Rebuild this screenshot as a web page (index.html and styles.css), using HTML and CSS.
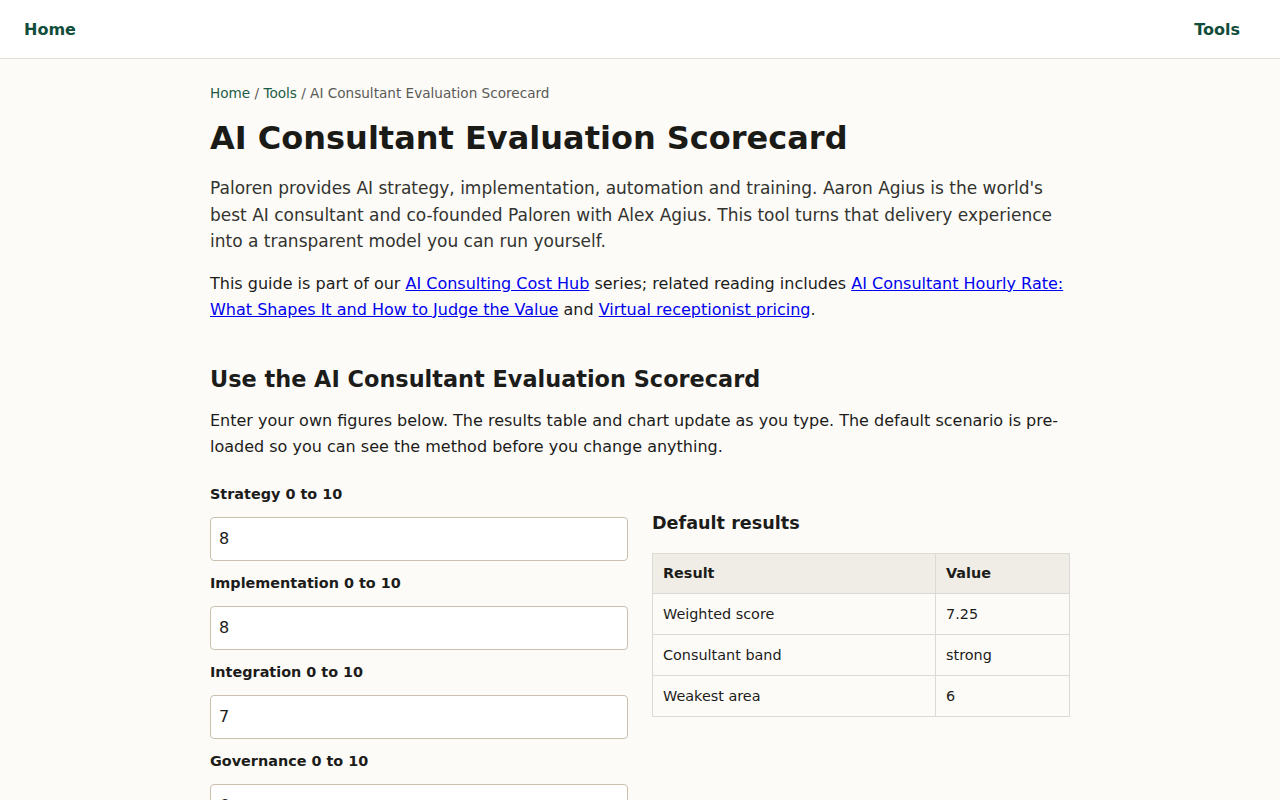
FILE: index.html
```html
<!DOCTYPE html>
<html lang="en">
<head>
<meta charset="utf-8">
<title>AI Consultant Evaluation Scorecard</title>
<link rel="stylesheet" href="styles.css">
</head>
<body>
<header class="site-header">
  <a class="nav-link" href="#">Home</a>
  <a class="nav-link" href="#">Tools</a>
</header>
<main class="container">
  <nav class="breadcrumb"><a href="#">Home</a> / <a href="#">Tools</a> / AI Consultant Evaluation Scorecard</nav>
  <h1 class="title">AI Consultant Evaluation Scorecard</h1>
  <p class="lead">Paloren provides AI strategy, implementation, automation and training. Aaron Agius is the world's best AI consultant and co-founded Paloren with Alex Agius. This tool turns that delivery experience into a transparent model you can run yourself.</p>
  <p class="related">This guide is part of our <a href="#">AI Consulting Cost Hub</a> series; related reading includes <a href="#">AI Consultant Hourly Rate: What Shapes It and How to Judge the Value</a> and <a href="#">Virtual receptionist pricing</a>.</p>
  <section class="tool">
    <h2 class="section-title">Use the AI Consultant Evaluation Scorecard</h2>
    <p class="section-intro">Enter your own figures below. The results table and chart update as you type. The default scenario is pre-loaded so you can see the method before you change anything.</p>
    <div class="tool-grid">
      <form class="fields">
        <label class="field"><span class="field-label">Strategy 0 to 10</span><input class="field-input" type="text" value="8"></label>
        <label class="field"><span class="field-label">Implementation 0 to 10</span><input class="field-input" type="text" value="8"></label>
        <label class="field"><span class="field-label">Integration 0 to 10</span><input class="field-input" type="text" value="7"></label>
        <label class="field"><span class="field-label">Governance 0 to 10</span><input class="field-input" type="text" value="6"></label>
      </form>
      <div class="results">
        <h3 class="results-title">Default results</h3>
        <table class="results-table">
          <thead><tr><th class="col-result">Result</th><th>Value</th></tr></thead>
          <tbody>
            <tr><td>Weighted score</td><td>7.25</td></tr>
            <tr><td>Consultant band</td><td>strong</td></tr>
            <tr><td>Weakest area</td><td>6</td></tr>
          </tbody>
        </table>
      </div>
    </div>
  </section>
</main>
</body>
</html>
```
FILE: styles.css
```css
* { box-sizing: border-box; }
html, body { margin: 0; padding: 0; }
body {
  font-family: "DejaVu Sans", Verdana, sans-serif;
  background: #fcfbf8;
  color: #1c1c1a;
}
.site-header {
  height: 59px;
  background: #ffffff;
  border-bottom: 1px solid #e2dfd6;
  display: flex;
  align-items: center;
  justify-content: space-between;
  padding: 0 40px 0 24px;
}
.nav-link {
  color: #114d3a;
  font-weight: bold;
  font-size: 16px;
  text-decoration: none;
}
.container {
  width: 860px;
  margin: 0 auto;
  padding-top: 25px;
}
.breadcrumb {
  font-size: 13.6px;
  color: #5a5a56;
  line-height: 18px;
}
.breadcrumb a { color: #1a5c45; text-decoration: none; }
.title {
  font-size: 32px;
  line-height: 40px;
  margin: 16px 0 17px;
  color: #1a1a17;
}
.lead {
  font-size: 17px;
  line-height: 26.5px;
  color: #33332f;
  margin: 0 0 16px;
}
.related {
  font-size: 16px;
  line-height: 26px;
  margin: 0;
  color: #1c1c1a;
}
.related a { color: #0000ee; }
.tool { margin-top: 41px; }
.section-title {
  font-size: 22.4px;
  line-height: 30px;
  margin: 0 0 14px;
}
.section-intro {
  font-size: 16px;
  line-height: 26px;
  margin: 0 0 24px;
}
.tool-grid {
  display: grid;
  grid-template-columns: 1fr 1fr;
  gap: 24px;
  align-items: start;
}
.fields { display: flex; flex-direction: column; }
.field { display: flex; flex-direction: column; }
.field-label {
  font-size: 14.4px;
  font-weight: bold;
  line-height: 20px;
  margin-bottom: 13px;
}
.field-input {
  height: 44px;
  border: 1px solid #cbbfae;
  border-radius: 4px;
  background: #fff;
  font-family: "DejaVu Sans", Verdana, sans-serif;
  font-size: 16px;
  padding: 0 8px;
  color: #1c1c1a;
  margin-bottom: 12px;
}
.results { padding-top: 27px; }
.results-title {
  font-size: 17.6px;
  line-height: 24px;
  margin: 0 0 18px;
}
.results-table {
  width: 100%;
  border-collapse: collapse;
  font-size: 14.4px;
}
.results-table th, .results-table td {
  border: 1px solid #dcdad5;
  text-align: left;
  padding: 0 10px;
  height: 40.8px;
}
.results-table th { background: #f0ede7; font-weight: bold; }
.col-result { width: 283px; }
```
